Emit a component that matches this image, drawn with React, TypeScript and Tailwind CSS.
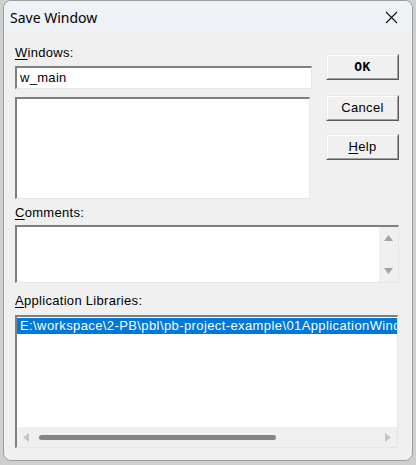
import React from 'react';

const body = { fontFamily: '"Liberation Sans", Arial, sans-serif' };

function Label({ k, rest, className = '' }: { k: string; rest: string; className?: string }) {
  return (
    <div className={`text-[13px] leading-[16px] tracking-[0.3px] text-black ${className}`} style={body}>
      <span className="underline underline-offset-2">{k}</span>
      {rest}
    </div>
  );
}

function Button({ children, className = '' }: { children: React.ReactNode; className?: string }) {
  return (
    <div className={`h-[26px] w-[73px] border border-t-[#e8e8e8] border-l-[#e8e8e8] border-r-[#5a5a5a] border-b-[#5a5a5a] bg-[#f0f0f0] ${className}`}>
      <div className="flex h-full w-full items-center justify-center border-r border-b border-t border-l border-t-white border-l-white border-r-[#a0a0a0] border-b-[#a0a0a0] text-[13px] tracking-[0.3px] text-black" style={body}>
        {children}
      </div>
    </div>
  );
}

const sunken =
  'border-t-2 border-l-2 border-r border-b border-t-[#7f7f7f] border-l-[#7f7f7f] border-r-[#e6e6e6] border-b-[#e6e6e6] bg-white';

export default function App() {
  return (
    <div className="h-[465px] w-[416px] bg-[#cfcfcf] px-[3px] pb-[4px]">
      <div className="flex h-full flex-col overflow-hidden rounded-b-lg rounded-t-lg border border-[#9c9c9c] bg-[#f0f0f0]">
        <div className="flex h-[33px] shrink-0 items-center justify-between bg-[#eef2f7] pl-[6px] pr-[14px]">
          <span className="text-[14px] text-black" style={{ fontFamily: '"Noto Sans", sans-serif' }}>
            Save Window
          </span>
          <svg width="13" height="13" viewBox="0 0 13 13">
            <path d="M1 1 L12 12 M12 1 L1 12" stroke="#111" strokeWidth="1.1" />
          </svg>
        </div>

        <div className="flex flex-col pl-[11px] pr-[13px] pt-[11px]">
          <div className="flex">
            <div className="flex w-[298px] flex-col">
              <Label k="W" rest="indows:" />
              <div className={`mt-[5px] flex h-[23px] items-center pl-[3px] text-[13px] tracking-[0.3px] ${sunken}`} style={body}>
                w_main
              </div>
              <div className={`mt-[8px] h-[102px] w-[295px] ${sunken}`} />
            </div>
            <div className="ml-[14px] flex flex-col pt-[9px]">
              <Button>
                <span className="font-bold" style={{ fontFamily: '"DejaVu Sans Mono", monospace', fontSize: 13 }}>
                  OK
                </span>
              </Button>
              <Button className="mt-[15px]">Cancel</Button>
              <Button className="mt-[13px]">
                <span>
                  <span className="underline underline-offset-2">H</span>elp
                </span>
              </Button>
            </div>
          </div>

          <Label k="C" rest="omments:" className="mt-[6px]" />
          <div className={`mt-[4px] flex h-[58px] ${sunken}`}>
            <div className="flex-1" />
            <div className="flex w-[19px] flex-col items-center justify-between bg-[#f0f0f0] py-[8px]">
              <svg width="9" height="6" viewBox="0 0 9 6">
                <path d="M4.5 0 L9 6 L0 6 Z" fill="#a3a3a3" />
              </svg>
              <svg width="9" height="6" viewBox="0 0 9 6">
                <path d="M0 0 L9 0 L4.5 6 Z" fill="#a3a3a3" />
              </svg>
            </div>
          </div>

          <Label k="A" rest="pplication Libraries:" className="mt-[10px]" />
          <div className={`mt-[6px] flex h-[133px] w-[383px] flex-col ${sunken}`}>
            <div className="flex-1 overflow-hidden pt-[1px]">
              <div className="h-[16px] overflow-hidden whitespace-nowrap bg-[#0078d7] pl-[3px] text-[13px] leading-[16px] tracking-[0.4px] text-white" style={body}>
                E:\workspace\2-PB\pbl\pb-project-example\01ApplicationWind
              </div>
            </div>
            <div className="flex h-[20px] items-center bg-[#f0f0f0] px-[6px]">
              <svg width="6" height="9" viewBox="0 0 6 9">
                <path d="M0 4.5 L6 0 L6 9 Z" fill="#c4c4c4" />
              </svg>
              <div className="ml-[10px] h-[5px] w-[237px] rounded-full bg-[#858585]" />
              <div className="flex-1" />
              <svg width="6" height="9" viewBox="0 0 6 9">
                <path d="M0 0 L6 4.5 L0 9 Z" fill="#c4c4c4" />
              </svg>
            </div>
          </div>
        </div>
      </div>
    </div>
  );
}
